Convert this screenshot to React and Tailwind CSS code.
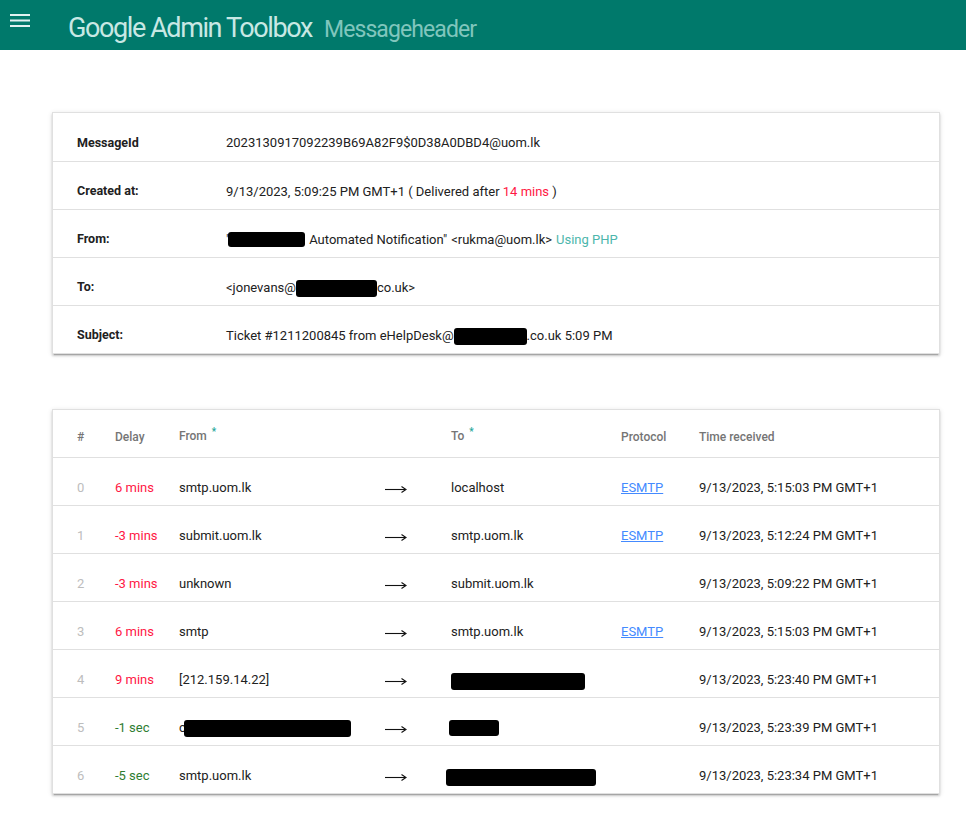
import React from "react";

const Blob = ({ w, h = 16, className = "" }) => (
  <span
    className={`inline-block bg-black rounded-[3px] align-middle ${className}`}
    style={{ width: w, height: h }}
  />
);

const Arrow = () => (
  <svg width="22" height="9" viewBox="0 0 22 9" className="block">
    <line x1="0" y1="4.5" x2="20" y2="4.5" stroke="#111" strokeWidth="1.1" />
    <path d="M16.5 1.5 L21 4.5 L16.5 7.5" fill="none" stroke="#111" strokeWidth="1.1" />
  </svg>
);

const infoRows = [
  { label: "MessageId", value: <span>2023130917092239B69A82F9$0D38A0DBD4@uom.lk</span> },
  {
    label: "Created at:",
    value: (
      <span>
        9/13/2023, 5:09:25 PM GMT+1 ( Delivered after <span className="text-[#ff1744]">14 mins</span> )
      </span>
    ),
  },
  {
    label: "From:",
    value: (
      <span className="flex items-center">
        <span>"</span>
        <Blob w={77} h={15} className="-ml-[2px] mr-[4px]" />
        <span>Automated Notification"</span>
        <span className="ml-[4px]">&lt;rukma@uom.lk&gt;</span>
        <span className="ml-[4px] text-[#4db6ac]">Using PHP</span>
      </span>
    ),
  },
  {
    label: "To:",
    value: (
      <span className="flex items-center">
        <span>&lt;jonevans@</span>
        <Blob w={81} h={17} className="mt-[2px]" />
        <span>co.uk&gt;</span>
      </span>
    ),
  },
  {
    label: "Subject:",
    value: (
      <span className="flex items-center">
        <span>Ticket #1211200845 from eHelpDesk@</span>
        <Blob w={73} h={17} className="mt-[1px]" />
        <span>.co.uk 5:09 PM</span>
      </span>
    ),
  },
];

const hops = [
  { n: 0, delay: "6 mins", red: true, from: "smtp.uom.lk", to: "localhost", proto: "ESMTP", time: "9/13/2023, 5:15:03 PM GMT+1" },
  { n: 1, delay: "-3 mins", red: true, from: "submit.uom.lk", to: "smtp.uom.lk", proto: "ESMTP", time: "9/13/2023, 5:12:24 PM GMT+1" },
  { n: 2, delay: "-3 mins", red: true, from: "unknown", to: "submit.uom.lk", proto: "", time: "9/13/2023, 5:09:22 PM GMT+1" },
  { n: 3, delay: "6 mins", red: true, from: "smtp", to: "smtp.uom.lk", proto: "ESMTP", time: "9/13/2023, 5:15:03 PM GMT+1" },
  { n: 4, delay: "9 mins", red: true, from: "[212.159.14.22]", to: <Blob w={134} h={17} className="mt-[2px]" />, proto: "", time: "9/13/2023, 5:23:40 PM GMT+1" },
  {
    n: 5,
    delay: "-1 sec",
    red: false,
    from: (
      <span className="flex items-center">
        <span>c</span>
        <Blob w={167} h={17} className="-ml-[2px] mt-[2px]" />
      </span>
    ),
    to: <Blob w={50} h={16} className="-ml-[2px]" />,
    proto: "",
    time: "9/13/2023, 5:23:39 PM GMT+1",
  },
  { n: 6, delay: "-5 sec", red: false, from: "smtp.uom.lk", to: <Blob w={150} h={17} className="-ml-[5px] mt-[2px]" />, proto: "", time: "9/13/2023, 5:23:34 PM GMT+1" },
];

const cardShadow =
  "shadow-[0_2px_2px_0_rgba(0,0,0,0.14),0_3px_1px_-2px_rgba(0,0,0,0.2),0_1px_5px_0_rgba(0,0,0,0.12)]";

const gridCols = "grid grid-cols-[38px_64px_206px_66px_170px_78px_1fr]";

export default function App() {
  return (
    <div className="min-h-[816px] bg-white" style={{ fontFamily: "Roboto, 'Liberation Sans', sans-serif" }}>
      <header className="h-[50px] bg-[#00796b] flex items-center">
        <div className="w-[68px] h-full flex items-start pl-[10px] pt-[14px]">
          <svg width="20" height="13" viewBox="0 0 20 13">
            <rect x="0" y="0" width="20" height="2" fill="#e0f2f1" />
            <rect x="0" y="5.5" width="20" height="2" fill="#e0f2f1" />
            <rect x="0" y="11" width="20" height="2" fill="#e0f2f1" />
          </svg>
        </div>
        <div className="flex items-baseline pt-[6px]">
          <span className="text-[27px] text-[#c8e8e4] tracking-[-1.4px]">Google Admin Toolbox</span>
          <span className="ml-[12px] text-[23px] text-[#80c6bd] tracking-[-0.9px]">Messageheader</span>
        </div>
      </header>

      <div className={`mt-[62px] ml-[52px] w-[888px] bg-white border border-[#e0e0e0] ${cardShadow}`}>
        {infoRows.map((r, i) => (
          <div
            key={r.label}
            className={`h-[48px] pt-3 flex items-center text-[13px] text-[#212121] ${i > 0 ? "border-t border-[#e0e0e0]" : ""}`}
          >
            <div className="w-[173px] pl-[24px] font-bold text-[12.5px]">{r.label}</div>
            <div className="flex-1">{r.value}</div>
          </div>
        ))}
      </div>

      <div className={`mt-[55px] ml-[52px] w-[888px] bg-white border border-[#e0e0e0] ${cardShadow}`}>
        <div className={`${gridCols} h-[47px] items-end pb-[8px] pl-[24px] text-[12px] font-medium text-[#757575] leading-6`}>
          <div>#</div>
          <div>Delay</div>
          <div>
            From <span className="text-[#26a69a] text-[10px] relative -top-[5px] ml-[2px]">*</span>
          </div>
          <div></div>
          <div>
            To <span className="text-[#26a69a] text-[10px] relative -top-[5px] ml-[2px]">*</span>
          </div>
          <div>Protocol</div>
          <div>Time received</div>
        </div>
        {hops.map((h) => (
          <div
            key={h.n}
            className={`${gridCols} h-[48px] pt-3 items-center pl-[24px] text-[13px] text-[#212121] border-t border-[#e0e0e0]`}
          >
            <div className="text-[#bdbdbd]">{h.n}</div>
            <div className={h.red ? "text-[#ff1744]" : "text-[#2e7d32]"}>{h.delay}</div>
            <div>{h.from}</div>
            <div className="pl-0 pt-[4px]"><Arrow /></div>
            <div>{h.to}</div>
            <div>
              {h.proto && <span className="text-[#448aff] underline">{h.proto}</span>}
            </div>
            <div>{h.time}</div>
          </div>
        ))}
      </div>
    </div>
  );
}
